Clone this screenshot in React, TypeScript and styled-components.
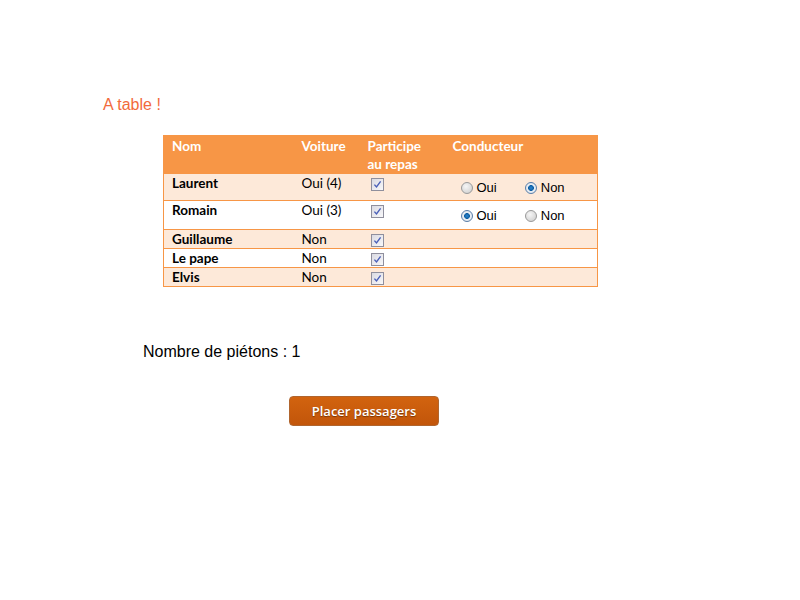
import React from "react";
import styled, { createGlobalStyle } from "styled-components";

const Global = createGlobalStyle`
  html, body { margin: 0; padding: 0; background: #ffffff; }
  body { font-family: "Liberation Sans", Arial, sans-serif; }
`;

const Page = styled.div`
  width: 800px;
  height: 600px;
  padding-top: 96px;
  box-sizing: border-box;
  display: flex;
  flex-direction: column;
  align-items: flex-start;
`;

const Title = styled.h1`
  margin: 0 0 21px 103px;
  font-family: "Liberation Sans", Arial, sans-serif;
  font-weight: normal;
  font-size: 16px;
  line-height: 18px;
  color: #f26a3c;
`;

const Table = styled.table`
  margin-left: 163px;
  width: 434px;
  table-layout: fixed;
  border-collapse: collapse;
  border: 1px solid #f79646;
  font-family: Lato, "Open Sans", sans-serif;
  font-size: 13.5px;
  color: #000;
`;

const HeadCell = styled.th<{ $w: number }>`
  width: ${(p) => p.$w}px;
  background: #f79646;
  color: #fff;
  font-weight: bold;
  text-align: left;
  vertical-align: top;
  padding: 1px 8px 0 8px;
  line-height: 18px;
  height: 37px;
  box-sizing: border-box;
`;

const Row = styled.tr<{ $alt: boolean }>`
  background: ${(p) => (p.$alt ? "#fde9d9" : "#ffffff")};
  border-top: 1px solid #f79646;
`;

const Cell = styled.td<{ $bold?: boolean }>`
  padding: 1px 8px 0 8px;
  line-height: 17px;
  vertical-align: top;
  font-weight: ${(p) => (p.$bold ? "bold" : "normal")};
`;

const RadioCell = styled.td<{ $extra: number }>`
  padding: ${(p) => 7 + p.$extra}px 8px ${(p) => 5 + p.$extra}px 16px;
  vertical-align: top;
`;

const RadioGroup = styled.div`
  display: flex;
  align-items: center;
  font-family: "Liberation Sans", Arial, sans-serif;
  font-size: 13px;
  color: #000;
`;

const RadioLabel = styled.label`
  display: flex;
  align-items: center;
  gap: 4px;
  width: 68px;
  line-height: 14px;
`;

const RadioDot = styled.span<{ $on: boolean }>`
  display: inline-block;
  width: 12px;
  height: 12px;
  border-radius: 50%;
  box-sizing: border-box;
  border: 1px solid ${(p) => (p.$on ? "#5a7ea8" : "#9a9a9a")};
  background: ${(p) =>
    p.$on
      ? "radial-gradient(circle at 50% 50%, #2a86d0 0, #0f5fa3 2.6px, #e8eef4 3.2px, #dde3ea 100%)"
      : "radial-gradient(circle at 40% 35%, #f6f6f6 0, #dcdcdc 60%, #c8c8c8 100%)"};
`;

const Check = styled.span`
  display: block;
  width: 13px;
  height: 13px;
  margin: 3px 0 1px 3px;
  box-sizing: border-box;
  border: 1px solid #8f8f9d;
  background: linear-gradient(135deg, #dadae2, #f8f8fa);
  position: relative;
  svg { position: absolute; left: 0; top: 0; }
`;

const Summary = styled.p`
  margin: 56px 0 0 143px;
  font-family: "Liberation Sans", Arial, sans-serif;
  font-size: 16px;
  line-height: 18px;
  color: #000;
`;

const Button = styled.button`
  margin: 35px 0 0 289px;
  width: 150px;
  height: 30px;
  border: 1px solid #b0652e;
  border-radius: 4px;
  background: linear-gradient(#d2630f, #c2550a);
  color: #fff;
  font-family: "Open Sans", sans-serif;
  font-weight: 600;
  font-size: 13px;
  text-shadow: 0 1px 1px rgba(70, 30, 0, 0.6);
  padding: 0;
  cursor: pointer;
`;

const CheckBox = () => (
  <Check>
    <svg width="11" height="11" viewBox="0 0 11 11">
      <path d="M2.4 5.6 L4.5 8 L8.6 2.4" fill="none" stroke="#4a5fb8" strokeWidth="1.4" />
    </svg>
  </Check>
);

type Person = { name: string; car: string; driver?: "oui" | "non" };

const people: Person[] = [
  { name: "Laurent", car: "Oui (4)", driver: "non" },
  { name: "Romain", car: "Oui (3)", driver: "oui" },
  { name: "Guillaume", car: "Non" },
  { name: "Le pape", car: "Non" },
  { name: "Elvis", car: "Non" },
];

export default function App() {
  return (
    <>
      <Global />
      <Page>
        <Title>A table !</Title>
        <Table>
          <thead>
            <tr>
              <HeadCell $w={130}>Nom</HeadCell>
              <HeadCell $w={66}>Voiture</HeadCell>
              <HeadCell $w={85}>
                Participe
                <br />
                au repas
              </HeadCell>
              <HeadCell $w={153}>Conducteur</HeadCell>
            </tr>
          </thead>
          <tbody>
            {people.map((p, i) => (
              <Row key={p.name} $alt={i % 2 === 0}>
                <Cell $bold>{p.name}</Cell>
                <Cell>{p.car}</Cell>
                <Cell>
                  <CheckBox />
                </Cell>
                {p.driver ? (
                  <RadioCell $extra={i}>
                    <RadioGroup>
                      <RadioLabel>
                        <RadioDot $on={p.driver === "oui"} />
                        Oui
                      </RadioLabel>
                      <RadioLabel>
                        <RadioDot $on={p.driver === "non"} />
                        Non
                      </RadioLabel>
                    </RadioGroup>
                  </RadioCell>
                ) : (
                  <Cell />
                )}
              </Row>
            ))}
          </tbody>
        </Table>
        <Summary>Nombre de piétons : 1</Summary>
        <Button>Placer passagers</Button>
      </Page>
    </>
  );
}
